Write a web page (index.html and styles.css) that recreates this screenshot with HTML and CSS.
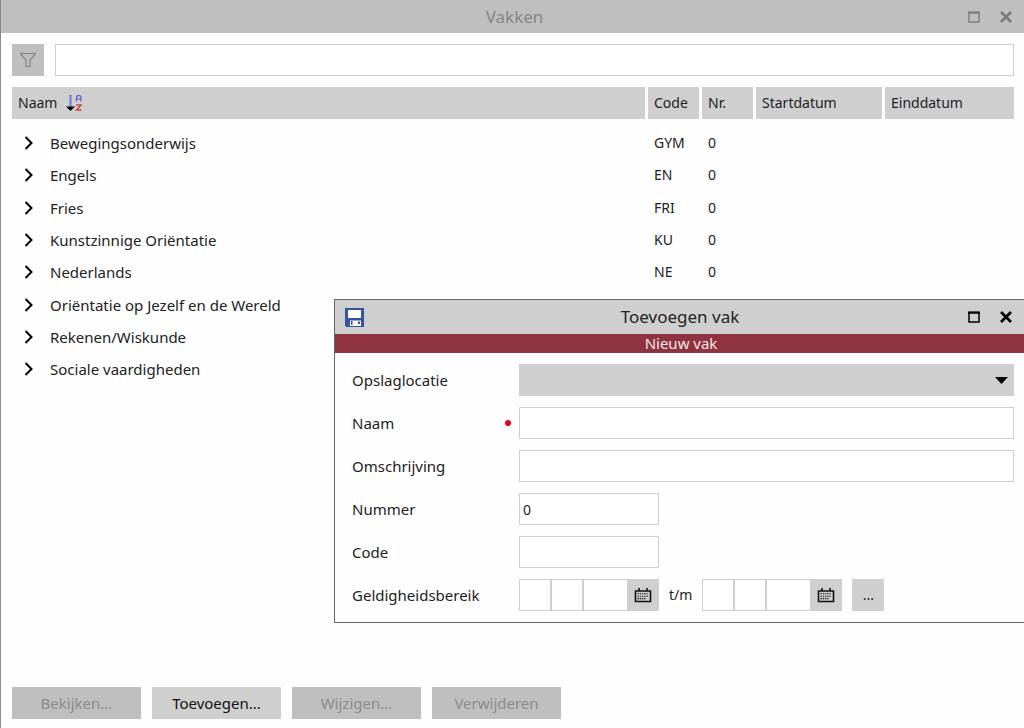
FILE: index.html
```html
<!DOCTYPE html>
<html lang="nl">
<head>
<meta charset="utf-8">
<title>Vakken</title>
<link rel="stylesheet" href="styles.css">
</head>
<body>
<main class="window inactive">
  <header class="titlebar">
    <h1 class="title">Vakken</h1>
    <div class="window-controls">
      <button class="icon-button" type="button" aria-label="Maximaliseren"><svg width="12" height="12" viewBox="0 0 12 12"><path d="M1 1.5h10V11H1z" fill="none" stroke="currentColor" stroke-width="1.4"/><path d="M.3 1.6h11.4" stroke="currentColor" stroke-width="2"/></svg></button>
      <button class="icon-button" type="button" aria-label="Sluiten"><svg width="12" height="12" viewBox="0 0 12 12"><path d="M1 1l10 10M11 1L1 11" stroke="currentColor" stroke-width="2.8"/></svg></button>
    </div>
  </header>
  <div class="content">
    <div class="search">
      <button class="filter" type="button" aria-label="Filter" disabled><svg width="16" height="16" viewBox="0 0 16 16"><path d="M1 1.5h14v1L10 8v6.5H6V8L1 2.5z" fill="none" stroke="currentColor" stroke-width="1.2"/><path d="M.4 1.5h2M13.6 1.5h2" stroke="currentColor" stroke-width="2"/></svg></button>
      <input class="field" type="text" aria-label="Zoeken">
    </div>
    <table class="subjects">
      <colgroup><col><col class="col-small"><col class="col-small"><col class="col-date"><col class="col-date"></colgroup>
      <thead>
        <tr>
          <th><span class="sorted">Naam <svg width="16" height="18" viewBox="0 0 16 18"><path d="M4.5 1v12" stroke="#6a6ad0" stroke-width="2.4" stroke-dasharray="1.5 .5"/><path d="M0 12.5h9L4.500 17z" fill="#000"/><path d="M10.500 7.500V3l1-1.300h2.500l1 1.300v4.500M10.500 5h4.500" fill="none" stroke="#5a5ace" stroke-width="1.200"/><path d="M10 11h5l-4.500 5H15.500" fill="none" stroke="#c84848" stroke-width="1.500"/></svg></span></th>
          <th>Code</th><th>Nr.</th><th>Startdatum</th><th>Einddatum</th>
        </tr>
      </thead>
      <tbody>
        <tr><td><button class="expand" type="button"><svg width="10" height="14" viewBox="0 0 10 14"><path d="M1.500 1L7.500 7L1.500 13" fill="none" stroke="#000" stroke-width="2"/></svg>Bewegingsonderwijs</button></td><td>GYM</td><td>0</td><td></td><td></td></tr>
        <tr><td><button class="expand" type="button"><svg width="10" height="14" viewBox="0 0 10 14"><path d="M1.500 1L7.500 7L1.500 13" fill="none" stroke="#000" stroke-width="2"/></svg>Engels</button></td><td>EN</td><td>0</td><td></td><td></td></tr>
        <tr><td><button class="expand" type="button"><svg width="10" height="14" viewBox="0 0 10 14"><path d="M1.500 1L7.500 7L1.500 13" fill="none" stroke="#000" stroke-width="2"/></svg>Fries</button></td><td>FRI</td><td>0</td><td></td><td></td></tr>
        <tr><td><button class="expand" type="button"><svg width="10" height="14" viewBox="0 0 10 14"><path d="M1.500 1L7.500 7L1.500 13" fill="none" stroke="#000" stroke-width="2"/></svg>Kunstzinnige Oriëntatie</button></td><td>KU</td><td>0</td><td></td><td></td></tr>
        <tr><td><button class="expand" type="button"><svg width="10" height="14" viewBox="0 0 10 14"><path d="M1.500 1L7.500 7L1.500 13" fill="none" stroke="#000" stroke-width="2"/></svg>Nederlands</button></td><td>NE</td><td>0</td><td></td><td></td></tr>
        <tr><td><button class="expand" type="button"><svg width="10" height="14" viewBox="0 0 10 14"><path d="M1.500 1L7.500 7L1.500 13" fill="none" stroke="#000" stroke-width="2"/></svg>Oriëntatie op Jezelf en de Wereld</button></td><td></td><td></td><td></td><td></td></tr>
        <tr><td><button class="expand" type="button"><svg width="10" height="14" viewBox="0 0 10 14"><path d="M1.500 1L7.500 7L1.500 13" fill="none" stroke="#000" stroke-width="2"/></svg>Rekenen/Wiskunde</button></td><td></td><td></td><td></td><td></td></tr>
        <tr><td><button class="expand" type="button"><svg width="10" height="14" viewBox="0 0 10 14"><path d="M1.500 1L7.500 7L1.500 13" fill="none" stroke="#000" stroke-width="2"/></svg>Sociale vaardigheden</button></td><td></td><td></td><td></td><td></td></tr>
      </tbody>
    </table>
  </div>
  <footer class="actions">
    <button class="action" type="button" disabled>Bekijken...</button>
    <button class="action" type="button">Toevoegen...</button>
    <button class="action" type="button" disabled>Wijzigen...</button>
    <button class="action" type="button" disabled>Verwijderen</button>
  </footer>
</main>

<section class="dialog" role="dialog" aria-labelledby="dialog-title">
  <header class="titlebar">
    <button class="icon-button" type="button" aria-label="Opslaan"><svg width="19" height="19" viewBox="0 0 19 19"><path d="M0 0h19v19H1.500L0 17.500z" fill="#3553a4"/><path d="M3 2h13v8H3zM5 12.500h11V18H5z" fill="#fff"/><path d="M6 13h1.500v4H6z" fill="#3553a4"/><path d="M13 13.500h2v2.500h-2z" fill="#3553a4"/></svg></button>
    <h2 class="title" id="dialog-title">Toevoegen vak</h2>
    <div class="window-controls">
      <button class="icon-button" type="button" aria-label="Maximaliseren"><svg width="12" height="12" viewBox="0 0 12 12"><path d="M1 1.500h10V11H1z" fill="none" stroke="currentColor" stroke-width="1.500"/><path d="M.3 1.600h11.400" stroke="currentColor" stroke-width="2.200"/></svg></button>
      <button class="icon-button" type="button" aria-label="Sluiten"><svg width="12" height="12" viewBox="0 0 12 12"><path d="M1 1l10 10M11 1L1 11" stroke="currentColor" stroke-width="2.800"/></svg></button>
    </div>
  </header>
  <p class="banner">Nieuw vak</p>
  <form class="form">
    <label for="location">Opslaglocatie</label>
    <div class="select-wrap"><select class="field" id="location"><option></option></select><svg class="caret" width="13" height="7" viewBox="0 0 13 7"><path d="M0 0h13L6.500 7z" fill="#000"/></svg></div>
    <label class="required" for="name">Naam</label>
    <input class="field" id="name" type="text">
    <label for="description">Omschrijving</label>
    <input class="field" id="description" type="text">
    <label for="number">Nummer</label>
    <input class="field short" id="number" type="text" value="0">
    <label for="code">Code</label>
    <input class="field short" id="code" type="text">
    <label for="from-day">Geldigheidsbereik</label>
    <div class="range">
      <div class="date">
        <input class="field" id="from-day" type="text"><input class="field" type="text" aria-label="Maand vanaf"><input class="field year" type="text" aria-label="Jaar vanaf">
        <button class="square" type="button" aria-label="Kalender vanaf"><svg width="18" height="15" viewBox="0 0 18 15"><path d="M1.500 3h15v10.500h-15z" fill="none" stroke="#111" stroke-width="1.600"/><path d="M5 0v3M13 0v3" stroke="#111" stroke-width="1.600"/><path d="M3.500 5.800h11M3.500 8.200h11M3.500 10.600h8" stroke="#111" stroke-width="1.100" stroke-dasharray="1.400 .8"/></svg></button>
      </div>
      <span>t/m</span>
      <div class="date">
        <input class="field" type="text" aria-label="Dag tot"><input class="field" type="text" aria-label="Maand tot"><input class="field year" type="text" aria-label="Jaar tot">
        <button class="square" type="button" aria-label="Kalender tot"><svg width="18" height="15" viewBox="0 0 18 15"><path d="M1.500 3h15v10.500h-15z" fill="none" stroke="#111" stroke-width="1.600"/><path d="M5 0v3M13 0v3" stroke="#111" stroke-width="1.600"/><path d="M3.500 5.800h11M3.500 8.200h11M3.500 10.600h8" stroke="#111" stroke-width="1.100" stroke-dasharray="1.400 .8"/></svg></button>
      </div>
      <button class="square" type="button">...</button>
    </div>
  </form>
</section>
</body>
</html>
```

FILE: styles.css
```css
* { box-sizing: border-box; }
body {
  margin: 0;
  min-height: 100vh;
  position: relative;
  overflow: hidden;
  background: #fefefe;
  color: #222;
  font: 14px/20px "Noto Sans", "Open Sans", sans-serif;
}
button, input, select { font: inherit; color: inherit; border: 0; border-radius: 0; margin: 0; padding: 0; }
button { background: none; }
svg { display: block; flex: none; }

.window { min-height: 100vh; display: flex; flex-direction: column; border-left: 1px solid #8c8c8c; }
.titlebar { display: flex; align-items: center; height: 33px; padding: 0 12px 0 10px; background: #cfcfcf; }
.inactive .titlebar { background: #bfbfbf; color: #858585; }
.title { flex: 1; margin: 0; font-size: 17px; font-weight: 400; line-height: 24px; text-align: center; }
.window .title { padding-left: 50px; }
.window-controls { display: flex; gap: 20px; color: #000; }
.inactive .window-controls { color: #7c7c7c; }

.content { flex: 1; padding: 11px 10px 11px 11px; }
.search { display: flex; gap: 11px; margin-bottom: 11px; }
.filter { width: 32px; height: 32px; display: grid; place-items: center; background: #bfbfbf; color: #858585; }
.field { width: 100%; min-width: 0; height: 32px; padding: 0 3px; border: 1px solid #cfcfcf; background: #fff; outline: 0; }
.search .field { flex: 1; }

.subjects { width: 100%; table-layout: fixed; border-collapse: separate; border-spacing: 0; }
.col-small { width: 54px; }
.col-date { width: 129px; }
.subjects th { height: 32px; padding: 0 0 0 6px; border-right: 3px solid transparent; background: #cfcfcf; background-clip: padding-box; font-weight: 400; text-align: left; }
.subjects th:last-child { border-right: 0; }
.subjects td { height: 32px; padding: 0 0 0 6px; }
.subjects tr:nth-child(3n) td { height: 33px; }
.subjects tbody::before { content: ""; display: block; height: 8px; }
.sorted { display: flex; align-items: center; gap: 9px; }
.expand { display: flex; align-items: center; gap: 16px; padding-left: 6px; font-size: 15px; }

.actions { display: flex; gap: 11px; padding: 0 11px 9px; }
.action { width: 129px; height: 32px; background: #cfcfcf; color: #111; font-size: 15px; }
.action:disabled { background: #bfbfbf; color: #8a8a8a; }

.dialog { position: absolute; top: 299px; left: 334px; right: -4px; border: 1px solid #666; background: #fefefe; }
.dialog .titlebar { height: 34px; padding: 0 15px 0 10px; }
.dialog .title { padding-left: 28px; }
.banner { margin: 0; background: #8f3340; color: #f6e6e8; font-size: 15px; line-height: 19px; text-align: center; }
.form { display: grid; grid-template-columns: 156px 1fr; gap: 11px; align-items: center; padding: 11px 13px 11px 17px; }
.form label { font-size: 15px; }
.required { display: flex; align-items: center; justify-content: space-between; }
.required::after { content: ""; width: 6px; height: 6px; margin-right: -3px; border-radius: 50%; background: #e8001c; }
.short { width: 140px; }
.select-wrap { display: grid; align-items: center; }
.select-wrap > * { grid-area: 1 / 1; }
.select-wrap select { appearance: none; background: #cfcfcf; }
.caret { justify-self: end; margin-right: 6px; pointer-events: none; }
.range { display: flex; gap: 10px; align-items: center; }
.date { display: flex; }
.date .field { width: 33px; border-right-width: 2px; }
.date .field + .field { width: 32px; border-left-width: 0; }
.date .field + .year { width: 43px; border-right-width: 0; }
.square { width: 32px; height: 32px; display: grid; place-items: center; background: #cfcfcf; }
```
